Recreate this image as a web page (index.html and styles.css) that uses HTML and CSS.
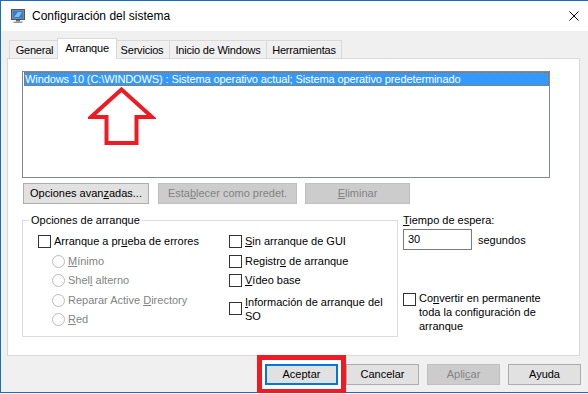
FILE: index.html
```html
<!DOCTYPE html>
<html lang="es">
<head>
<meta charset="utf-8">
<title>Configuración del sistema</title>
<link rel="stylesheet" href="styles.css">
</head>
<body>
<div class="window">
  <div class="titlebar">
    <svg class="app-icon" viewBox="0 0 16 16" width="16" height="16">
      <rect x="1.5" y="1.5" width="13" height="10" fill="#7d8a99" stroke="#4a5563"/>
      <rect x="3" y="3" width="10" height="7" fill="#2f7fd8"/>
      <path d="M4 9 L8 4 L12 4 L9 9 Z" fill="#9cc8f5" opacity="0.8"/>
      <rect x="6" y="12" width="4" height="1.5" fill="#5b6673"/>
      <rect x="3.5" y="13.5" width="9" height="1.5" fill="#8d98a5"/>
    </svg>
    <span class="title">Configuración del sistema</span>
    <div class="close-btn">
      <svg viewBox="0 0 10 10" width="10" height="10">
        <path d="M0.5 0.5 L9.5 9.5 M9.5 0.5 L0.5 9.5" stroke="#000" stroke-width="1" fill="none"/>
      </svg>
    </div>
  </div>
  <div class="client">
    <div class="tabs">
      <div class="tab tab-general">General</div>
      <div class="tab tab-boot selected">Arranque</div>
      <div class="tab tab-services">Servicios</div>
      <div class="tab tab-startup">Inicio de Windows</div>
      <div class="tab tab-tools">Herramientas</div>
    </div>
    <div class="panel">
      <div class="listbox">
        <div class="list-item">Windows 10 (C:\WINDOWS) : Sistema operativo actual; Sistema operativo predeterminado</div>
        <svg class="arrow" viewBox="0 0 68 62" width="68" height="62">
          <path d="M33.5 3.5 L64 31 L48.5 31 L48.5 57 L18.5 57 L18.5 31 L3 31 Z" fill="none" stroke="#ed1c24" stroke-width="4" stroke-linejoin="miter" stroke-miterlimit="6"/>
        </svg>
      </div>
      <div class="btn-row">
        <button class="btn btn-advanced">Opciones avan<u>z</u>adas...</button>
        <button class="btn btn-default" disabled>Esta<u>b</u>lecer como predet.</button>
        <button class="btn btn-delete" disabled><u>E</u>liminar</button>
      </div>
      <div class="options">
        <fieldset class="group">
          <legend>Opciones de arranque</legend>
          <div class="group-grid">
            <div class="col col-left">
              <div class="row"><span class="check"></span><span class="lbl">Arranque a pr<u>u</u>eba de errores</span></div>
              <div class="row sub"><span class="radio"></span><span class="lbl off"><u>M</u>ínimo</span></div>
              <div class="row sub"><span class="radio"></span><span class="lbl off">Shel<u>l</u> alterno</span></div>
              <div class="row sub"><span class="radio"></span><span class="lbl off">Reparar Active <u>D</u>irectory</span></div>
              <div class="row sub"><span class="radio"></span><span class="lbl off"><u>R</u>ed</span></div>
            </div>
            <div class="col col-right">
              <div class="row"><span class="check"></span><span class="lbl"><u>S</u>in arranque de GUI</span></div>
              <div class="row"><span class="check"></span><span class="lbl">Registr<u>o</u> de arranque</span></div>
              <div class="row"><span class="check"></span><span class="lbl"><u>V</u>ídeo base</span></div>
              <div class="row row-wrap"><span class="check"></span><span class="lbl lbl-wrap"><u>I</u>nformación de arranque del SO</span></div>
            </div>
          </div>
        </fieldset>
        <div class="side">
          <div class="side-label"><u>T</u>iempo de espera:</div>
          <div class="timeout">
            <div class="textbox">30</div>
            <span class="unit">segundos</span>
          </div>
          <div class="persist">
            <span class="check"></span>
            <span class="persist-text">Co<u>n</u>vertir en permanente toda la configuración de arranque</span>
          </div>
        </div>
      </div>
    </div>
    <div class="footer">
      <span class="highlight"><button class="btn btn-foot btn-ok">Aceptar</button></span>
      <button class="btn btn-foot">Cancelar</button>
      <button class="btn btn-foot" disabled>Apli<u>c</u>ar</button>
      <button class="btn btn-foot">Ayuda</button>
    </div>
  </div>
</div>
</body>
</html>
```

FILE: styles.css
```css
html, body {
  margin: 0;
  padding: 0;
  background: #ffffff;
  overflow: hidden;
}

body {
  font-family: "Liberation Sans", Arial, sans-serif;
  font-size: 11px;
  color: #000;
}

u {
  text-decoration: underline;
  text-underline-offset: 1px;
}

.window {
  width: 598px;
  height: 393px;
  box-sizing: border-box;
  border: 1px solid #1a6fb8;
  background: #f0f0f0;
  display: flex;
  flex-direction: column;
}

.titlebar {
  height: 30px;
  flex-shrink: 0;
  background: #ffffff;
  display: flex;
  align-items: center;
}

.app-icon {
  margin-left: 9px;
  flex-shrink: 0;
}

.title {
  margin-left: 6px;
  font-size: 12px;
  color: #000;
  white-space: nowrap;
}

.close-btn {
  margin-left: auto;
  width: 46px;
  height: 30px;
  display: flex;
  align-items: center;
  justify-content: center;
}

.client {
  flex: 1;
  padding: 7px 0 0 6px;
}

/* Tabs */
.tabs {
  display: flex;
  align-items: flex-end;
  height: 20px;
  margin-left: 2px;
}

.tab {
  box-sizing: border-box;
  height: 18px;
  padding: 2px 0 0;
  line-height: 14px;
  text-align: center;
  letter-spacing: -0.2px;
  border: 1px solid #d9d9d9;
  border-bottom: 0;
  background: #f0f0f0;
  margin-left: -1px;
  white-space: nowrap;
}

.tab-general {
  width: 51px;
  margin-left: 0;
}

.tab-boot {
  width: 56px;
}

.tab-services {
  width: 56px;
}

.tab-startup {
  width: 98px;
}

.tab-tools {
  width: 76px;
}

.tab.selected {
  width: 60px;
  height: 21px;
  margin: 0 -2px -1px -3px;
  background: #ffffff;
  position: relative;
  z-index: 1;
}

/* Panel */
.panel {
  box-sizing: border-box;
  width: 573px;
  height: 298px;
  border: 1px solid #d9d9d9;
  background: #ffffff;
  padding: 12px 0 0 14px;
}

.listbox {
  position: relative;
  box-sizing: border-box;
  width: 528px;
  height: 107px;
  border: 1px solid #828790;
  background: #fff;
  padding: 0 0 0 1px;
}

.list-item {
  box-sizing: border-box;
  height: 14px;
  line-height: 12px;
  letter-spacing: -0.1px;
  border: 1px dotted #cc6600;
  background: #3399ff;
  color: #ffffff;
  white-space: nowrap;
  overflow: hidden;
}

.arrow {
  position: absolute;
  left: 65px;
  top: 14px;
}

/* Buttons */
.btn {
  box-sizing: border-box;
  height: 21px;
  margin: 0;
  padding: 0;
  font-family: "Liberation Sans", Arial, sans-serif;
  font-size: 11px;
  color: #000;
  background: #e1e1e1;
  border: 1px solid #adadad;
  border-radius: 0;
  line-height: 17px;
  text-align: center;
  white-space: nowrap;
}

.btn:disabled {
  background: #cccccc;
  border-color: #bfbfbf;
  color: #838383;
}

.btn-row {
  display: flex;
  margin-top: 5px;
  padding-left: 1px;
}

.btn-advanced {
  width: 126px;
}

.btn-default {
  width: 139px;
  margin-left: 9px;
}

.btn-delete {
  width: 105px;
  margin-left: 8px;
}

/* Options area */
.options {
  display: flex;
  align-items: flex-start;
  margin-top: 10px;
}

.group {
  box-sizing: border-box;
  width: 376px;
  margin: 0;
  padding: 0 0 6px 15px;
  border: 1px solid #dcdcdc;
  min-inline-size: 0;
}

.group legend {
  padding: 0 2px;
  line-height: 13px;
  margin-left: -9px;
}

.group-grid {
  display: flex;
  padding-top: 5px;
}

.col {
  display: flex;
  flex-direction: column;
}

.col-left {
  width: 191px;
}

.row {
  display: flex;
  align-items: center;
  height: 19.5px;
  white-space: nowrap;
}

.row.sub {
  padding-left: 14px;
}

.check {
  box-sizing: border-box;
  width: 13px;
  height: 13px;
  border: 1px solid #333333;
  background: #ffffff;
  flex-shrink: 0;
}

.radio {
  box-sizing: border-box;
  width: 13px;
  height: 13px;
  border: 1px solid #bcbcbc;
  border-radius: 50%;
  background: #fcfcfc;
  flex-shrink: 0;
}

.lbl {
  margin-left: 3px;
  line-height: 13px;
}

.lbl.off {
  color: #838383;
}

.row-wrap {
  height: auto;
  padding-top: 4px;
  white-space: normal;
}

.lbl-wrap {
  width: 145px;
  line-height: 14px;
}

/* Side column */
.side {
  margin-left: 5px;
  display: flex;
  flex-direction: column;
}

.side-label {
  line-height: 13px;
  white-space: nowrap;
}

.timeout {
  display: flex;
  align-items: center;
  margin-top: 2px;
}

.textbox {
  box-sizing: border-box;
  width: 69px;
  height: 21px;
  border: 1px solid #7a7a7a;
  background: #fff;
  padding-left: 4px;
  line-height: 19px;
}

.unit {
  margin-left: 6px;
}

.persist {
  display: flex;
  align-items: flex-start;
  margin-top: 41px;
}

.persist .check {
  margin-top: 2px;
}

.persist-text {
  margin-left: 3px;
  width: 130px;
  line-height: 14px;
}

/* Footer */
.footer {
  display: flex;
  justify-content: flex-end;
  width: 574px;
  margin-top: 8px;
}

.btn-foot {
  width: 73px;
  margin-left: 8px;
}

.highlight {
  display: flex;
  margin: -9px -8px -9px 0;
  padding: 4px 3px;
  border: 5px solid #ed1c24;
  background: #ffffff;
}

.highlight .btn-foot {
  margin-left: 0;
}

.btn-ok {
  border: 2px solid #0078d7;
  line-height: 17px;
}

.highlight + .btn-foot {
  margin-left: 8px;
}
```
